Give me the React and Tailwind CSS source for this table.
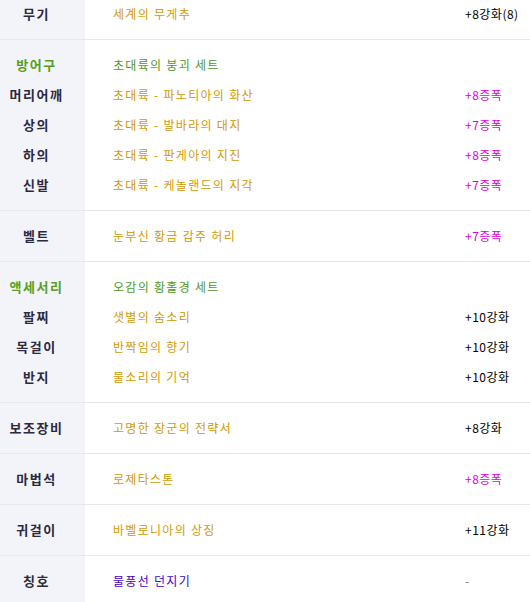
const FONT = "font-['Noto_Sans_CJK_KR','Noto_Sans',sans-serif]"

const C = {
  item: 'text-[#d09a00]',
  set: 'text-[#4d9a1c]',
  amp: 'text-[#dd00e0]',
  plain: 'text-black',
  title: 'text-[#4400cc]',
}

const SECTIONS = [
  { rows: [{ label: '무기', name: '세계의 무게추', value: '+8강화(8)' }] },
  {
    rows: [
      { label: '방어구', green: true, name: '초대륙의 붕괴 세트', nameColor: C.set },
      { label: '머리어깨', name: '초대륙 - 파노티아의 화산', value: '+8증폭', amp: true },
      { label: '상의', name: '초대륙 - 발바라의 대지', value: '+7증폭', amp: true },
      { label: '하의', name: '초대륙 - 판게아의 지진', value: '+8증폭', amp: true },
      { label: '신발', name: '초대륙 - 케놀랜드의 지각', value: '+7증폭', amp: true },
    ],
  },
  { rows: [{ label: '벨트', name: '눈부신 황금 갑주 허리', value: '+7증폭', amp: true }] },
  {
    rows: [
      { label: '액세서리', green: true, name: '오감의 황홀경 세트', nameColor: C.set },
      { label: '팔찌', name: '샛별의 숨소리', value: '+10강화' },
      { label: '목걸이', name: '반짝임의 향기', value: '+10강화' },
      { label: '반지', name: '물소리의 기억', value: '+10강화' },
    ],
  },
  { rows: [{ label: '보조장비', name: '고명한 장군의 전략서', value: '+8강화' }] },
  { rows: [{ label: '마법석', name: '로제타스톤', value: '+8증폭', amp: true }] },
  { rows: [{ label: '귀걸이', name: '바벨로니아의 상징', value: '+11강화' }] },
  { rows: [{ label: '칭호', name: '물풍선 던지기', nameColor: C.title, value: '-', dash: true }] },
]

function Row({ r }) {
  return (
    <div className="flex h-[30px] items-center">
      <div
        className={`w-[85px] shrink-0 pr-[12px] text-center text-[13px] font-bold tracking-[1.5px] ${
          r.green ? 'text-[#58a01c]' : 'text-[#2b2840]'
        }`}
      >
        {r.label}
      </div>
      <div className={`w-[380px] shrink-0 pl-[28px] text-[12px] tracking-[1.3px] ${r.nameColor || C.item}`}>
        {r.name}
      </div>
      <div
        className={`text-[12px] tracking-[0.5px] ${r.dash ? 'text-[#77778a]' : r.amp ? C.amp : C.plain}`}
      >
        {r.value}
      </div>
    </div>
  )
}

export default function App() {
  return (
    <div className={`h-[602px] w-[530px] overflow-hidden bg-white ${FONT}`}>
      <div className="-mt-[11px]">
        {SECTIONS.map((s, i) => (
          <div
            key={i}
            className="border-b border-[#e8e8ec] bg-[linear-gradient(to_right,#f3f4f9_85px,#ffffff_85px)] py-[10px]"
          >
            {s.rows.map((r, j) => (
              <Row key={j} r={r} />
            ))}
          </div>
        ))}
      </div>
    </div>
  )
}
